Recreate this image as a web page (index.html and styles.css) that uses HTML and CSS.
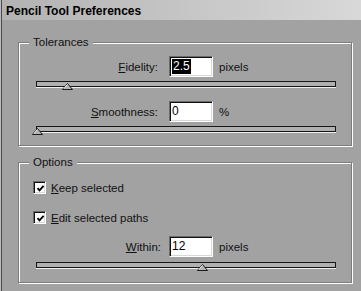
FILE: index.html
```html
<!DOCTYPE html>
<html lang="en">
<head>
  <meta charset="UTF-8">
  <title>Pencil Tool Preferences</title>
  <link rel="stylesheet" href="styles.css">
</head>
<body>
  <div class="dialog">
    <div class="titlebar">Pencil Tool Preferences</div>

    <fieldset class="group group-first">
      <legend>Tolerances</legend>
      <div class="field">
        <label class="field-label"><u>F</u>idelity:</label>
        <span class="edit"><span class="selected">2.5</span></span>
        <span class="unit">pixels</span>
      </div>
      <div class="slider"><span class="thumb" style="left: 25px"><svg width="11" height="7" viewBox="0 0 11 7"><polygon points="0.5,6.5 5.5,0.5 10.5,6.5" fill="#b4b4b4" stroke="#1c1c1c"/><line x1="1.8" y1="5.6" x2="5.5" y2="1.4" stroke="#f0f0f0"/></svg></span></div>

      <div class="field field-next">
        <label class="field-label"><u>S</u>moothness:</label>
        <span class="edit">0</span>
        <span class="unit">%</span>
      </div>
      <div class="slider"><span class="thumb" style="left: -5px"><svg width="11" height="7" viewBox="0 0 11 7"><polygon points="0.5,6.5 5.5,0.5 10.5,6.5" fill="#b4b4b4" stroke="#1c1c1c"/><line x1="1.8" y1="5.6" x2="5.5" y2="1.4" stroke="#f0f0f0"/></svg></span></div>
    </fieldset>

    <fieldset class="group group-options">
      <legend>Options</legend>
      <div class="check check-first">
        <span class="box"><svg width="9" height="9" viewBox="0 0 9 9"><path d="M1.5 4.2 L3.5 6.4 L7.6 1.8" fill="none" stroke="#000" stroke-width="1.8"/></svg></span>
        <span><u>K</u>eep selected</span>
      </div>
      <div class="check">
        <span class="box"><svg width="9" height="9" viewBox="0 0 9 9"><path d="M1.5 4.2 L3.5 6.4 L7.6 1.8" fill="none" stroke="#000" stroke-width="1.8"/></svg></span>
        <span><u>E</u>dit selected paths</span>
      </div>
      <div class="field field-within">
        <label class="field-label"><u>W</u>ithin:</label>
        <span class="edit">12</span>
        <span class="unit">pixels</span>
      </div>
      <div class="slider slider-within"><span class="thumb" style="left: 160px"><svg width="11" height="7" viewBox="0 0 11 7"><polygon points="0.5,6.5 5.5,0.5 10.5,6.5" fill="#b4b4b4" stroke="#1c1c1c"/><line x1="1.8" y1="5.6" x2="5.5" y2="1.4" stroke="#f0f0f0"/></svg></span></div>
    </fieldset>
  </div>
</body>
</html>
```

FILE: styles.css
```css
body {
  margin: 0;
  background: #a2a2a2;
  font-family: "Liberation Sans", Arial, sans-serif;
  font-size: 11.5px;
  color: #111;
}

.dialog {
  width: 361px;
  height: 291px;
  box-sizing: border-box;
  padding-left: 2px;
  box-shadow: inset 1px 0 #bcbcbc, inset 2px 0 #4a4a4a;
  overflow: hidden;
}

.titlebar {
  height: 18px;
  padding: 2px 0 0 4px;
  line-height: 18px;
  font-size: 12px;
  font-weight: bold;
  color: #000;
  background: linear-gradient(to right, #b2b2b2, #d8d8d8);
  border-top: 1px solid #c4c4c4;
  margin-top: -1px;
}

.group {
  margin: 0 9px 0 16px;
  padding: 7px 0 13px;
  border: 1px solid #7c7c7c;
  box-shadow: inset 1px 1px #fff, 1px 1px #fff;
  min-width: 0;
}

.group-first {
  margin-top: 16px;
}

.group-options {
  margin-top: 10px;
  padding-bottom: 14px;
}

legend {
  margin-left: 10px;
  padding: 0 4px;
  line-height: 13px;
  background: #a2a2a2;
}

.field {
  display: flex;
  align-items: center;
  height: 21px;
}

.field-next {
  margin-top: 14px;
}

.field-within {
  margin-top: 12px;
}

.field-label {
  width: 139px;
  margin-right: 11px;
  text-align: right;
}

.field-within .field-label {
  width: 142px;
  margin-right: 8px;
}

.edit {
  width: 44px;
  height: 21px;
  box-sizing: border-box;
  padding: 2px 0 0 2px;
  border: 1px solid;
  border-color: #6a6a6a #fff #fff #6a6a6a;
  box-shadow: inset 1px 1px #111, inset -1px -1px #d8d8d8;
  background: #fff;
  font-size: 12px;
  line-height: 15px;
  color: #000;
}

.selected {
  display: inline-block;
  padding: 0 1px;
  background: #000;
  color: #fff;
}

.unit {
  margin-left: 6px;
}

.slider {
  position: relative;
  width: 300px;
  height: 6px;
  box-sizing: border-box;
  margin: 4px 0 0 17px;
  border: 1px solid #161616;
  background: #b0b0b0;
  box-shadow: 0 1px #efefef;
}

.slider-within {
  margin-top: 5px;
}

.thumb {
  position: absolute;
  top: 1px;
  width: 11px;
  height: 7px;
}

.thumb svg {
  display: block;
}

.check {
  display: flex;
  align-items: center;
  gap: 5px;
  height: 13px;
  margin: 17px 0 0 14px;
}

.check-first {
  margin-top: 5px;
}

.box {
  width: 13px;
  height: 13px;
  box-sizing: border-box;
  padding: 2px;
  border: 1px solid;
  border-color: #6a6a6a #fff #fff #6a6a6a;
  box-shadow: inset 1px 1px #111, inset -1px -1px #d8d8d8;
  background: #fff;
}

.box svg {
  display: block;
}
```
